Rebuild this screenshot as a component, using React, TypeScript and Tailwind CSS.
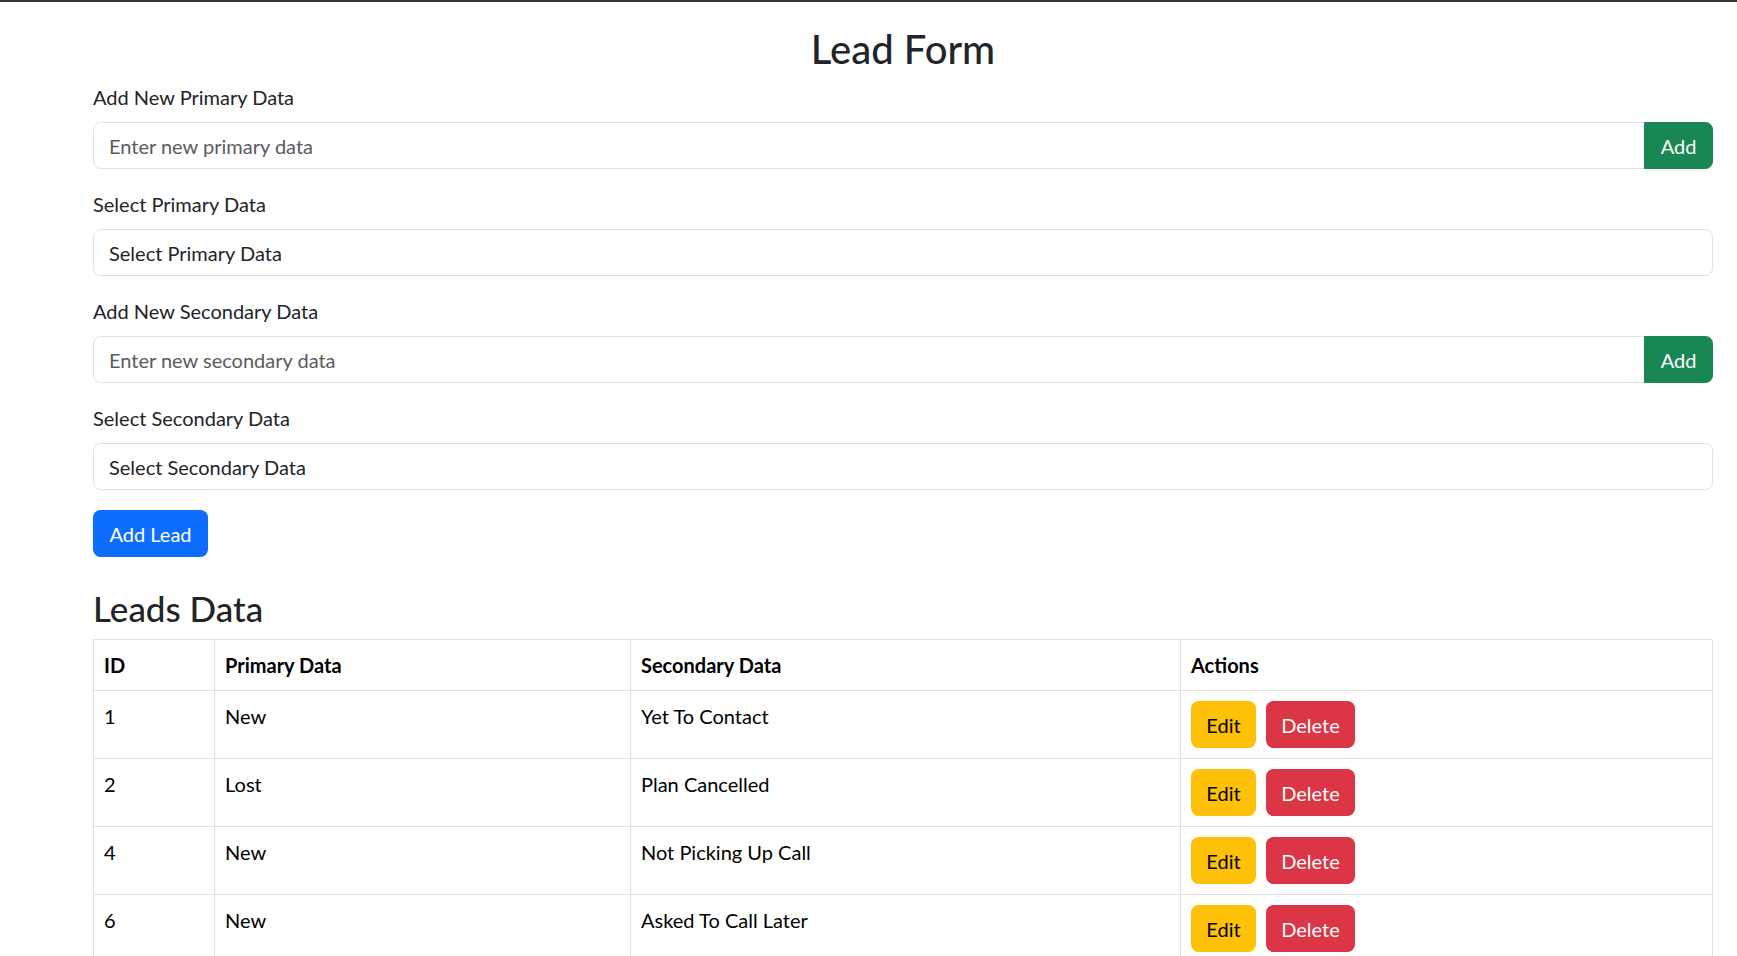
import React from "react";

const rows = [
  { id: 1, p: "New", s: "Yet To Contact" },
  { id: 2, p: "Lost", s: "Plan Cancelled" },
  { id: 4, p: "New", s: "Not Picking Up Call" },
  { id: 6, p: "New", s: "Asked To Call Later" },
];

function InputGroup({ label, placeholder }: { label: string; placeholder: string }) {
  return (
    <div className="mb-[20px]">
      <label className="block mb-[10px]">{label}</label>
      <div className="flex">
        <input
          placeholder={placeholder}
          className="flex-1 min-w-0 h-[47px] px-[15px] border border-[#dee2e6] rounded-l-[7.5px] bg-white text-[#212529] placeholder:text-[#595c5f] outline-none"
        />
        <button className="w-[69px] h-[47px] bg-[#198754] text-white rounded-r-[7.5px] border border-[#198754] -ml-px">
          Add
        </button>
      </div>
    </div>
  );
}

function SelectGroup({ label, text }: { label: string; text: string }) {
  return (
    <div className="mb-[20px]">
      <label className="block mb-[10px]">{label}</label>
      <div className="h-[47px] px-[15px] border border-[#dee2e6] rounded-[7.5px] bg-white flex items-center text-[#212529]">
        {text}
      </div>
    </div>
  );
}

export default function App() {
  return (
    <div className="min-h-screen bg-white text-[#212529] text-[20px] leading-[30px] font-['Segoe_UI',Lato,sans-serif]">
      <div className="h-[2px] bg-[#2d3a2c]" />
      <div className="pl-[93px] pr-[24px] pt-[23px]">
        <h2 className="text-center text-[40px] leading-[48px] font-medium mb-[9px]">Lead Form</h2>
        <InputGroup label="Add New Primary Data" placeholder="Enter new primary data" />
        <SelectGroup label="Select Primary Data" text="Select Primary Data" />
        <InputGroup label="Add New Secondary Data" placeholder="Enter new secondary data" />
        <SelectGroup label="Select Secondary Data" text="Select Secondary Data" />
        <button className="w-[115px] h-[47px] bg-[#0d6efd] text-white rounded-[7.5px]">Add Lead</button>

        <h3 className="mt-[30px] text-[35px] leading-[42px] font-medium mb-[10px]">Leads Data</h3>
        <table className="w-full table-fixed border-collapse text-black">
          <colgroup>
            <col className="w-[121px]" />
            <col className="w-[416px]" />
            <col className="w-[550px]" />
            <col />
          </colgroup>
          <thead>
            <tr>
              {["ID", "Primary Data", "Secondary Data", "Actions"].map((h) => (
                <th key={h} className="border border-[#dee2e6] p-[10px] text-left align-top font-bold">
                  {h}
                </th>
              ))}
            </tr>
          </thead>
          <tbody>
            {rows.map((r) => (
              <tr key={r.id}>
                <td className="border border-[#dee2e6] p-[10px] align-top">{r.id}</td>
                <td className="border border-[#dee2e6] p-[10px] align-top">{r.p}</td>
                <td className="border border-[#dee2e6] p-[10px] align-top">{r.s}</td>
                <td className="border border-[#dee2e6] p-[10px] align-top">
                  <div className="flex gap-[10px]">
                    <button className="w-[65px] h-[47px] bg-[#ffc107] text-black rounded-[7.5px]">Edit</button>
                    <button className="w-[89px] h-[47px] bg-[#dc3545] text-white rounded-[7.5px]">Delete</button>
                  </div>
                </td>
              </tr>
            ))}
          </tbody>
        </table>
      </div>
    </div>
  );
}
